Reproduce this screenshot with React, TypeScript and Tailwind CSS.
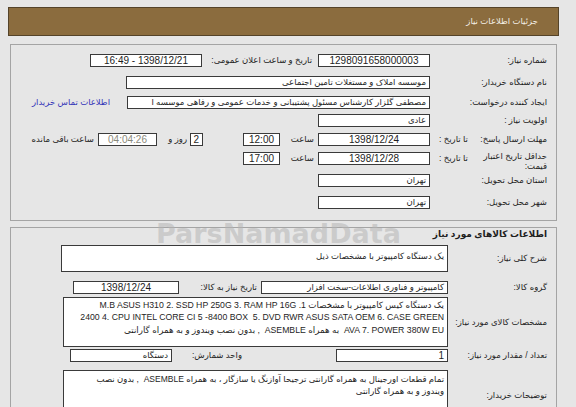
import { ReactNode } from 'react';

const font = { fontFamily: '"Liberation Sans", "DejaVu Sans", sans-serif' };

function Box({
  w,
  children,
  align = 'right',
  num = false,
  className = '',
}: {
  w: string;
  children?: ReactNode;
  align?: 'right' | 'center';
  num?: boolean;
  className?: string;
}) {
  return (
    <div
      className={`${w} h-[13px] shrink-0 border border-[#3a3a3a] bg-white px-[3px] leading-[11px] whitespace-nowrap overflow-hidden ${
        align === 'center' ? 'text-center' : 'text-right'
      } ${num ? 'text-[10px]' : ''} ${className}`}
    >
      {children}
    </div>
  );
}

function Label({ w, children, className = '' }: { w: string; children: ReactNode; className?: string }) {
  return (
    <div className={`${w} h-[13px] shrink-0 leading-[13px] whitespace-nowrap ${className}`}>{children}</div>
  );
}

export default function App() {
  return (
    <div
      dir="rtl"
      style={font}
      className="relative w-[576px] h-[407px] overflow-hidden bg-[#e6e6e6] text-[8.5px] text-[#1e1e1e] pl-[8px] pr-[17px] pt-[7px]"
    >
      {/* page header */}
      <div className="h-[29px] bg-[#8b6c3e] border border-[#544329] flex items-center pr-[20px] text-[#f4efe6]">
        جزئیات اطلاعات نیاز
      </div>

      {/* need details */}
      <div className="mt-[8px] mx-[2px] h-[177px] border border-[#a4a4a4] pr-[9px] pt-[9px]">
        <div className="flex h-[22px]">
          <Label w="w-[113px]">شماره نیاز:</Label>
          <Box w="w-[112px] mr-[4px]" align="center" num>1298091658000003</Box>
          <Label w="w-[106px] mr-[6px]">تاریخ و ساعت اعلان عمومی:</Label>
          <Box w="w-[112px] mr-[4px]" align="center" num>1398/12/21 - 16:49</Box>
        </div>
        <div className="flex h-[20px]">
          <Label w="w-[113px]">نام دستگاه خریدار:</Label>
          <Box w="w-[304px] mr-[4px]">موسسه املاک و مستغلات تامین اجتماعی</Box>
        </div>
        <div className="flex h-[18px]">
          <Label w="w-[113px]">ایجاد کننده درخواست:</Label>
          <Box w="w-[303px] mr-[4px]">مصطفی گلزار کارشناس مسئول پشتیبانی و خدمات عمومی و رفاهی موسسه ا</Box>
          <Label w="w-[90px] mr-[6px]" className="pr-[11px]">
            <span className="text-[#3434b8]">اطلاعات تماس خریدار</span>
          </Label>
        </div>
        <div className="flex h-[19px]">
          <Label w="w-[113px]">اولویت نیاز :</Label>
          <Box w="w-[112px] mr-[4px]">عادی</Box>
        </div>
        <div className="flex h-[19px]">
          <div className="w-[113px] h-[13px] shrink-0 flex justify-between pl-[5px] leading-[13px] whitespace-nowrap">
            <span>مهلت ارسال پاسخ:</span>
            <span>تا تاریخ :</span>
          </div>
          <Box w="w-[112px] mr-[4px]" align="center" num>1398/12/24</Box>
          <Label w="w-[24px] mr-[4px]">ساعت</Label>
          <Box w="w-[37px] mr-[10px]" align="center" num>12:00</Box>
          <Box w="w-[13px] mr-[40px]" align="center" num className="px-0">2</Box>
          <Label w="w-[26px] mr-[3px]">روز و</Label>
          <Box w="w-[59px] mr-[4px]" align="center" num className="bg-[#efefc9] text-[#8a8a7a]">04:04:26</Box>
          <Label w="w-[70px] mr-[4px]">ساعت باقی مانده</Label>
        </div>
        <div className="flex h-[22px]">
          <div className="w-[113px] h-[13px] shrink-0 flex justify-between pl-[5px]">
            <span className="w-[70px] leading-[10px] -mt-[1px]">حداقل تاریخ اعتبار قیمت:</span>
            <span className="leading-[13px] whitespace-nowrap">تا تاریخ :</span>
          </div>
          <Box w="w-[112px] mr-[4px]" align="center" num>1398/12/28</Box>
          <Label w="w-[24px] mr-[4px]">ساعت</Label>
          <Box w="w-[37px] mr-[10px]" align="center" num>17:00</Box>
        </div>
        <div className="flex h-[22px]">
          <Label w="w-[113px]">استان محل تحویل:</Label>
          <Box w="w-[112px] mr-[4px]">تهران</Box>
        </div>
        <div className="flex h-[22px]">
          <Label w="w-[113px]">شهر محل تحویل:</Label>
          <Box w="w-[112px] mr-[4px]">تهران</Box>
        </div>
      </div>

      {/* goods */}
      <div className="mt-[6px] mx-[2px] h-[200px] border border-[#a4a4a4] pr-[9px]">
        <div className="h-[12px] leading-[12px] font-bold text-[9px]">اطلاعات کالاهای مورد نیاز</div>

        <div className="flex items-center mt-[5px]">
          <Label w="w-[95px]">شرح کلی نیاز:</Label>
          <div className="w-[387px] h-[27px] mr-[4px] shrink-0 border border-[#3a3a3a] bg-white px-[3px] pt-[4px] leading-[12px]">
            یک دستگاه کامپیوتر با مشخصات ذیل
          </div>
        </div>

        <div className="flex mt-[9px]">
          <Label w="w-[95px]">گروه کالا:</Label>
          <Box w="w-[187px] mr-[4px]">کامپیوتر و فناوری اطلاعات-سخت افزار</Box>
          <Label w="w-[75px] mr-[4px]">تاریخ نیاز به کالا:</Label>
          <Box w="w-[106px] mr-[3px]" align="center" num>1398/12/24</Box>
        </div>

        <div className="flex items-center mt-[3px]">
          <Label w="w-[95px]">مشخصات کالای مورد نیاز:</Label>
          <div className="w-[385px] h-[50px] mr-[4px] shrink-0 border border-[#3a3a3a] bg-white px-[3px] pt-[1px] leading-[12.3px] text-[8.7px] whitespace-nowrap overflow-hidden">
            <div>یک دستگاه کیس کامپیوتر با مشخصات 1. M.B ASUS H310 2. SSD HP 250G 3. RAM HP 16G</div>
            <div dir="ltr" className="text-right">2400 4. CPU INTEL CORE CI 5 -8400 BOX&nbsp; 5. DVD RWR ASUS SATA OEM 6. CASE GREEN</div>
            <div>AVA 7. POWER 380W EU&nbsp; به همراه ASEMBLE&nbsp; , بدون نصب ویندوز و به همراه گارانتی</div>
          </div>
        </div>

        <div className="flex mt-[2px]">
          <Label w="w-[95px]">تعداد / مقدار مورد نیاز:</Label>
          <Box w="w-[112px] mr-[4px]" num>1</Box>
          <Label w="w-[51px] mr-[94px]">واحد شمارش:</Label>
          <Box w="w-[102px] mr-[19px]">دستگاه</Box>
        </div>

        <div className="flex items-center mt-[8px]">
          <Label w="w-[95px]">توضیحات خریدار:</Label>
          <div className="w-[385px] h-[50px] mr-[4px] shrink-0 border border-[#3a3a3a] bg-white px-[3px] pt-[2px] leading-[12px]">
            <div className="whitespace-nowrap">تمام قطعات اورجینال به همراه گارانتی ترجیحا آوازنگ یا سازگار ، به همراه ASEMBLE&nbsp; , بدون نصب</div>
            <div>ویندوز و به همراه گارانتی</div>
          </div>
        </div>
      </div>

      {/* watermark */}
      <div
        dir="ltr"
        style={{ fontFamily: '"DejaVu Sans", sans-serif' }}
        className="pointer-events-none absolute left-[156px] top-[220px] text-[27px] font-bold leading-[28px] text-[#b4b4b4]/55"
      >
        ParsNamadData
      </div>
    </div>
  );
}
